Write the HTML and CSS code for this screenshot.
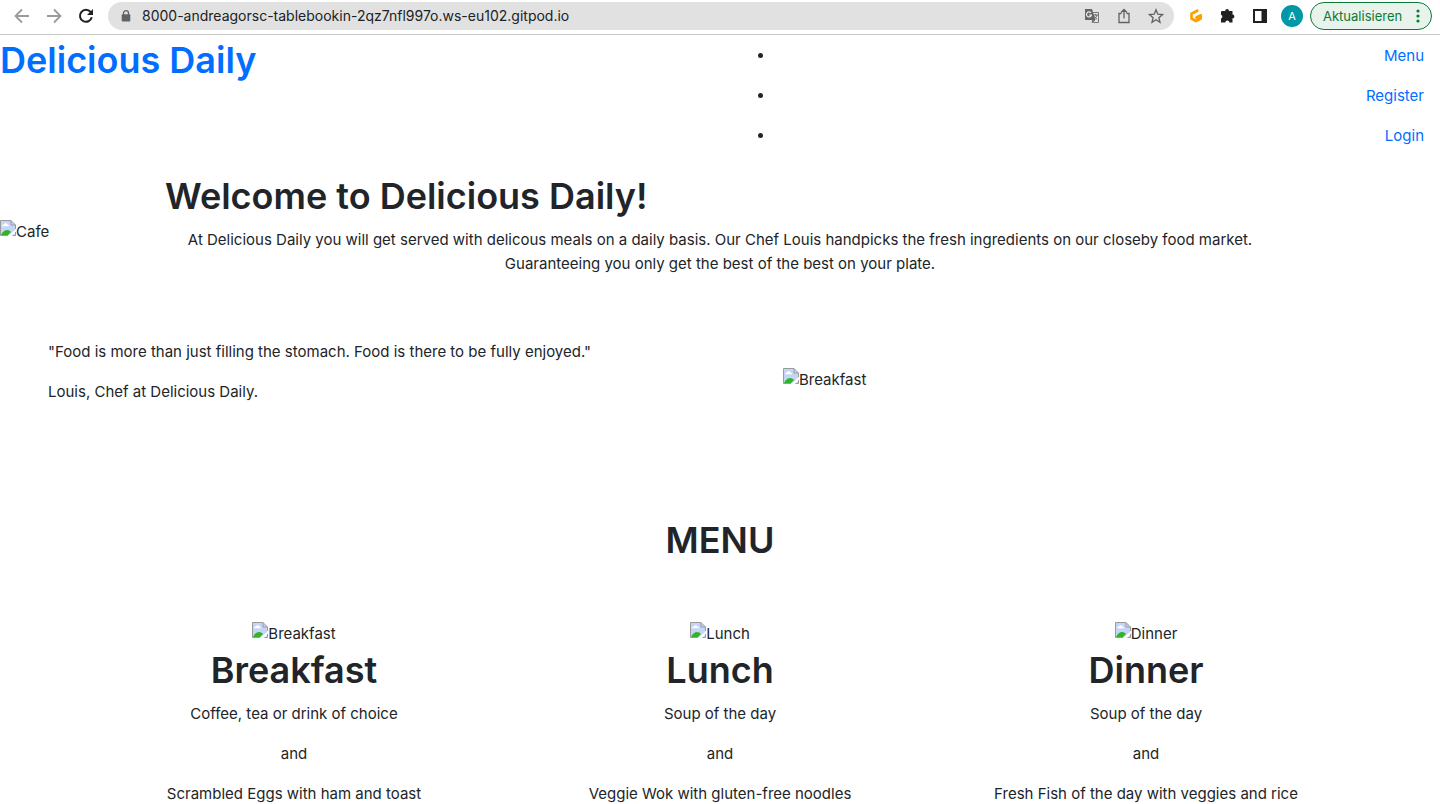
FILE: index.html
```html
<!DOCTYPE html>
<html lang="en">
<head>
<meta charset="utf-8">
<meta name="viewport" content="width=device-width, initial-scale=1">
<title>Delicious Daily</title>
<link rel="stylesheet" href="styles.css">
</head>
<body>
<svg class="defs" aria-hidden="true">
  <symbol id="missing" viewBox="0 0 16 16">
    <path d="M.5.5h10.500l4.500 4.500v10.500H.5z" fill="#c5d5f8"/>
    <path d="M2 6.200c0-1.500 1.500-1.700 2-1.700.3-1.800 3-1.800 3.300 0 1.200 0 1.700.8 1.700 1.700z" fill="#fff"/>
    <path d="M1 15c1.500-3.500 4-5 6-5 2.500 0 3 1 4 2l-3 3z" fill="#30b526"/>
    <path d="M8 16l8-7v3l-4 4z" fill="#fff"/>
    <path d="M11 0h5v5z" fill="#fff"/>
    <path d="M8 15.500H.5V.5H11l4.500 4.500v4M11 .5V5h4.500M12.500 15.500h3V12" fill="none" stroke="#9b9b9b"/>
  </symbol>
</svg>
<div class="browser">
  <header class="toolbar">
    <button class="tool" aria-label="Back"><svg class="icon" viewBox="0 0 16 16"><path d="M15 8H2M8 1.500L1.500 8 8 14.500" fill="none" stroke="#9b9b9b" stroke-width="1.800"/></svg></button>
    <button class="tool" aria-label="Forward"><svg class="icon" viewBox="0 0 16 16"><path d="M1 8h13M8 1.500L14.500 8 8 14.500" fill="none" stroke="#9b9b9b" stroke-width="1.800"/></svg></button>
    <button class="tool" aria-label="Reload"><svg class="icon" viewBox="0 0 16 16"><path d="M13.800 9.300A6 6 0 1 1 12.600 4" fill="none" stroke="#202124" stroke-width="2"/><path d="M15 1v6H9z" fill="#202124"/></svg></button>
    <div class="address">
      <svg class="lock" viewBox="0 0 10 12"><path d="M2.500 5V3.200a2.500 2.500 0 0 1 5 0V5" fill="none" stroke="#5f6368" stroke-width="1.300"/><rect x=".7" y="4.300" width="8.600" height="7.200" rx="1" fill="#5f6368"/></svg>
      <input class="url" type="text" aria-label="Address" value="8000-andreagorsc-tablebookin-2qz7nfl997o.ws-eu102.gitpod.io">
      <button class="tool" aria-label="Translate"><svg class="icon" viewBox="0 0 16 16"><path d="M6.500 4.500h8v10h-5z" fill="#e4e4e4" stroke="#777"/><path d="M1 1h7l3.500 11H1z" fill="#666"/><path d="M7 5a2.500 2.500 0 1 0 .4 2H5" fill="none" stroke="#eee" stroke-width="1.200"/><path d="M9 7h5M11.500 6v1M13 7c-.5 2-1.500 3-3 4M10.500 8.500l2.500 3M9 12l-1 2.500 3-2.500z" fill="none" stroke="#666"/></svg></button>
      <button class="tool" aria-label="Share"><svg class="icon" viewBox="0 0 16 16"><path d="M5.500 5.500h-2.500v9h10v-9h-2.500M8 10.500V1.800M5 4.500l3-3 3 3" fill="none" stroke="#5f6368" stroke-width="1.300"/></svg></button>
      <button class="tool" aria-label="Bookmark"><svg class="icon" viewBox="0 0 16 16"><path d="M8 1.800l1.800 4.400 4.700.4-3.600 3.100 1.100 4.600L8 11.800l-4 2.500 1.100-4.600L1.500 6.600l4.700-.4z" fill="none" stroke="#5f6368" stroke-width="1.300"/></svg></button>
    </div>
    <div class="extensions">
      <button class="tool" aria-label="Gitpod"><svg class="icon" viewBox="0 0 16 16"><path d="M9.300 2.700L3.500 5.800v4.700L8 13l4.700-2.500V7.300L8.500 9.500" fill="none" stroke="#ffa000" stroke-width="2.700" stroke-linecap="round" stroke-linejoin="round"/></svg></button>
      <button class="tool" aria-label="Extensions"><svg class="icon" viewBox="0 0 16 16"><path d="M2 3h3.200a1.900 1.900 0 0 1 3.800 0h3.500v3.500a1.900 1.900 0 0 1 0 3.800v4.200H9.300a2 2 0 0 0-4 0H1v-4a2 2 0 0 0 0-3.800V4q0-1 1-1z" fill="#202124"/></svg></button>
      <button class="tool" aria-label="Side panel"><svg class="icon" viewBox="0 0 16 16"><path d="M1 1h14v14H1zM3 3v10h6.500V3z" fill="#202124" fill-rule="evenodd"/></svg></button>
      <button class="avatar" aria-label="Profile A">A</button>
    </div>
    <button class="update">Aktualisieren<svg class="dots" viewBox="0 0 4 16"><g fill="#0b7a38"><circle cx="2" cy="3" r="1.600"/><circle cx="2" cy="8" r="1.600"/><circle cx="2" cy="13" r="1.600"/></g></svg></button>
  </header>
  <div class="page">
    <nav class="nav">
      <a class="brand" href="#"><h1 class="title">Delicious Daily</h1></a>
      <ul class="links">
        <li><a class="link" href="#menu">Menu</a></li>
        <li><a class="link" href="#register">Register</a></li>
        <li><a class="link" href="#login">Login</a></li>
      </ul>
    </nav>
    <main>
      <section class="hero">
        <span class="picture"><svg class="missing"><use href="#missing"/></svg>Cafe</span>
        <div class="welcome">
          <h1 class="title">Welcome to Delicious Daily!</h1>
          <p class="text centered">At Delicious Daily you will get served with delicous meals on a daily basis. Our Chef Louis handpicks the fresh ingredients on our closeby food market. Guaranteeing you only get the best of the best on your plate.</p>
        </div>
      </section>
      <section class="quote">
        <div>
          <p class="text">"Food is more than just filling the stomach. Food is there to be fully enjoyed."</p>
          <p class="text">Louis, Chef at Delicious Daily.</p>
        </div>
        <span class="picture"><svg class="missing"><use href="#missing"/></svg>Breakfast</span>
      </section>
      <section class="menu" id="menu">
        <h1 class="title">MENU</h1>
        <div class="meals">
          <article class="meal">
            <span class="picture"><svg class="missing"><use href="#missing"/></svg>Breakfast</span>
            <h1 class="title">Breakfast</h1>
            <p class="text">Coffee, tea or drink of choice</p>
            <p class="text">and</p>
            <p class="text">Scrambled Eggs with ham and toast</p>
          </article>
          <article class="meal">
            <span class="picture"><svg class="missing"><use href="#missing"/></svg>Lunch</span>
            <h1 class="title">Lunch</h1>
            <p class="text">Soup of the day</p>
            <p class="text">and</p>
            <p class="text">Veggie Wok with gluten-free noodles</p>
          </article>
          <article class="meal">
            <span class="picture"><svg class="missing"><use href="#missing"/></svg>Dinner</span>
            <h1 class="title">Dinner</h1>
            <p class="text">Soup of the day</p>
            <p class="text">and</p>
            <p class="text">Fresh Fish of the day with veggies and rice</p>
          </article>
        </div>
      </section>
    </main>
  </div>
</div>
</body>
</html>
```
FILE: styles.css
```css
* { box-sizing: border-box; }
body {
  margin: 0;
  font-family: Inter, "Liberation Sans", sans-serif;
  font-size: 15px;
  line-height: 24px;
  color: #212529;
  background: #fff;
}
button, input { font: inherit; color: inherit; border: 0; background: none; padding: 0; margin: 0; }
a { color: #006eff; text-decoration: none; }
.defs { display: none; }
.browser { display: flex; flex-direction: column; height: 100vh; }

.toolbar {
  display: flex;
  flex: none;
  align-items: center;
  padding: 2px 8px 4px 14px;
  gap: 16px;
  border-bottom: 1px solid #c9c9c9;
}
.tool { display: flex; flex: none; }
.icon { width: 16px; height: 16px; }
.address {
  display: flex;
  flex: 1;
  align-items: center;
  gap: 16px;
  height: 28px;
  margin-left: -2px;
  padding: 0 10px 0 13px;
  border-radius: 14px;
  background: #e1e1e1;
}
.lock { width: 10px; height: 12px; margin-right: -5px; }
.url { flex: 1; min-width: 0; font-size: 14px; outline: 0; color: #202124; }
.extensions { display: flex; align-items: center; gap: 16px; margin-left: -2px; }
.avatar { width: 22px; height: 22px; margin-left: -3px; border-radius: 50%; background: #0097a7; color: #fff; font-size: 11px; line-height: 22px; }
.update {
  display: flex;
  align-items: center;
  justify-content: space-between;
  width: 122px;
  height: 28px;
  margin-left: -9px;
  padding: 0 11px 0 12px;
  border: 1px solid #0b7a38;
  border-radius: 14px;
  background: #e8f3ec;
  color: #0b7a38;
  font-size: 13px;
}
.dots { width: 4px; height: 16px; }

.page { flex: 1; min-height: 0; padding-top: 1px; overflow: hidden; }
.title { margin: 0 0 8px; font-size: 36px; line-height: 48px; font-weight: 600; }
.text { margin: 0 0 16px; }
.centered { text-align: center; }
.picture { display: inline-flex; white-space: nowrap; }
.missing { width: 16px; height: 16px; }

.nav { display: grid; grid-template-columns: 1fr 1fr; }
.links { margin: 0 0 16px; padding-left: 55px; text-align: right; }
.link { display: block; padding: 8px 16px; }
.hero { display: grid; grid-template-columns: 165px 1fr 165px; align-items: center; }
.quote { display: grid; grid-template-columns: 1fr 1fr; align-items: center; padding: 48px; column-gap: 126px; }
.menu { padding: 48px 81px; text-align: center; }
.meals { display: grid; grid-template-columns: repeat(3, 1fr); padding-top: 49px; }
```
